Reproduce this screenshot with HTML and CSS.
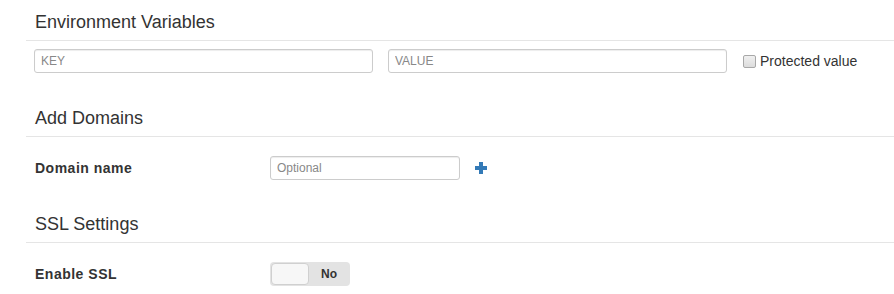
FILE: index.html
```html
<!DOCTYPE html>
<html lang="en">
<head>
  <meta charset="UTF-8" />
  <title>App settings</title>
  <link rel="stylesheet" href="styles.css">
</head>
<body>
  <div class="settings">

    <div class="section">
      <h4 class="section-title">Environment Variables</h4>
      <div class="env-row">
        <input class="field field-wide" type="text" placeholder="KEY">
        <input class="field field-wide" type="text" placeholder="VALUE">
        <label class="check">
          <span class="check-box"></span>
          Protected value
        </label>
      </div>
    </div>

    <div class="section">
      <h4 class="section-title">Add Domains</h4>
      <div class="form-row">
        <label class="form-label">Domain name</label>
        <input class="field field-domain" type="text" placeholder="Optional">
        <svg class="plus" width="12" height="12" viewBox="0 0 12 12">
          <rect x="4" y="0" width="4" height="12" fill="#337ab7" />
          <rect x="0" y="4" width="12" height="4" fill="#337ab7" />
        </svg>
      </div>
    </div>

    <div class="section">
      <h4 class="section-title">SSL Settings</h4>
      <div class="form-row">
        <label class="form-label">Enable SSL</label>
        <div class="toggle">
          <span class="toggle-knob"></span>
          <span class="toggle-text">No</span>
        </div>
      </div>
    </div>

  </div>
</body>
</html>
```

FILE: styles.css
```css
/* Settings form layout */
body {
  font-family: "Liberation Sans", Arial, Helvetica, sans-serif;
  font-size: 14px;
  color: #333;
  background-color: #fff;
  margin: 0;
}

.settings {
  padding-left: 26px;
}

.section + .section {
  margin-top: 23px;
}

.section:last-child {
  margin-top: 22px;
}

.section-title {
  margin: 0;
  padding: 12px 0 8px 9px;
  font-size: 18px;
  font-weight: 400;
  line-height: 20px;
  color: #333;
  border-bottom: 1px solid #e5e5e5;
}

.env-row {
  display: flex;
  align-items: center;
  gap: 15px;
  padding: 8px 0 0 8px;
}

.form-row {
  display: flex;
  align-items: center;
  padding: 19px 0 0 9px;
}

.field {
  box-sizing: border-box;
  height: 24px;
  padding: 2px 6px;
  font-family: inherit;
  font-size: 12px;
  color: #555;
  border: 1px solid #ccc;
  border-radius: 3px;
  box-shadow: inset 0 1px 1px rgba(0, 0, 0, 0.075);
  outline: none;
}

.field::placeholder {
  color: #888;
}

.field-wide {
  width: 339px;
}

.field-domain {
  width: 190px;
}

.check {
  display: flex;
  align-items: center;
  gap: 4px;
  margin-left: 1px;
  font-size: 14px;
  color: #333;
}

.check-box {
  box-sizing: border-box;
  width: 13px;
  height: 13px;
  border: 1px solid #a8a8a8;
  border-radius: 2px;
  background: linear-gradient(#f0f0f0, #dcdcdc);
}

.form-label {
  width: 235px;
  font-weight: bold;
  font-size: 14px;
  letter-spacing: 0.5px;
}

.plus {
  margin-left: 15px;
}

.toggle {
  box-sizing: border-box;
  display: flex;
  align-items: center;
  width: 80px;
  height: 24px;
  padding: 1px;
  border-radius: 4px;
  background-color: #e3e3e3;
}

.toggle-knob {
  box-sizing: border-box;
  width: 38px;
  height: 22px;
  border: 1px solid #d0d0d0;
  border-radius: 4px;
  background-color: #f7f7f7;
}

.toggle-text {
  flex: 1;
  text-align: center;
  font-size: 12px;
  font-weight: bold;
  color: #333;
}
```
